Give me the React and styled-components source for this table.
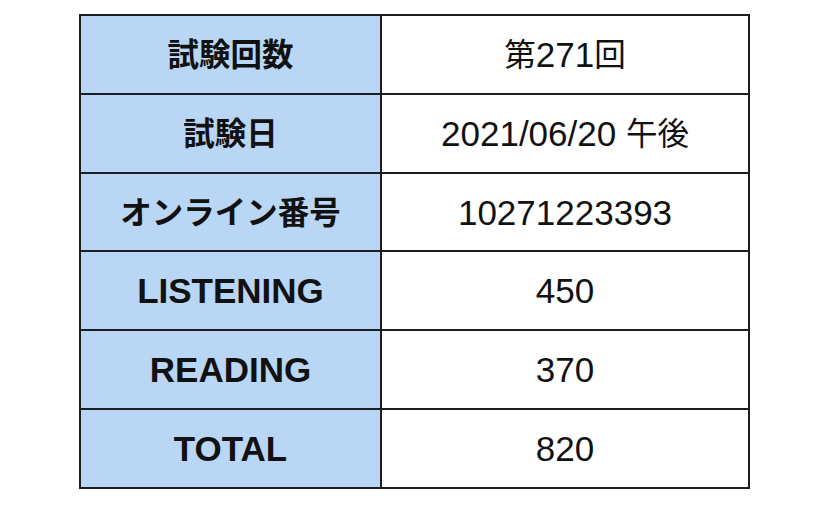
import React from "react";
import styled, { createGlobalStyle } from "styled-components";

const GlobalStyle = createGlobalStyle`
  html, body {
    margin: 0;
    padding: 0;
    background: #ffffff;
  }
  body {
    font-family: "Liberation Sans", "Noto Sans CJK JP", sans-serif;
  }
`;

const Page = styled.main`
  width: 828px;
  height: 508px;
  padding: 14px 0 0 79px;
  box-sizing: border-box;
`;

const ScoreTable = styled.table`
  width: 671px;
  height: 475px;
  border-collapse: collapse;
  table-layout: fixed;
`;

const HeadCell = styled.th`
  width: 299px;
  background-color: #b9d6f5;
  border: 2px solid #1e1e1e;
  font-size: 35px;
  font-weight: 700;
  color: #111;
  text-align: center;
  padding: 0;
  line-height: 1;
`;

const ValueCell = styled.td`
  border: 2px solid #1e1e1e;
  font-size: 35px;
  font-weight: 400;
  color: #111;
  text-align: center;
  padding: 0;
  line-height: 1;
`;

// 和文は欧文より少し小さく見えるので別サイズにする
const Jp = styled.span`
  font-family: "Noto Sans CJK JP", sans-serif;
  font-size: 0.9em;
  vertical-align: 1px;
`;

const rows = [
  ["試験回数", "第271回"],
  ["試験日", "2021/06/20 午後"],
  ["オンライン番号", "10271223393"],
  ["LISTENING", "450"],
  ["READING", "370"],
  ["TOTAL", "820"],
];

const cjk = /([\u3000-\u30ff\u4e00-\u9fff]+)/;

const Text = ({ children }) =>
  children
    .split(cjk)
    .filter(Boolean)
    .map((part, i) => (cjk.test(part) ? <Jp key={i}>{part}</Jp> : part));

const App = () => {
  return (
    <Page>
      <GlobalStyle />
      <ScoreTable>
        <tbody>
          {rows.map(([label, value]) => (
            <tr key={label}>
              <HeadCell>
                <Text>{label}</Text>
              </HeadCell>
              <ValueCell>
                <Text>{value}</Text>
              </ValueCell>
            </tr>
          ))}
        </tbody>
      </ScoreTable>
    </Page>
  );
};

export default App;
